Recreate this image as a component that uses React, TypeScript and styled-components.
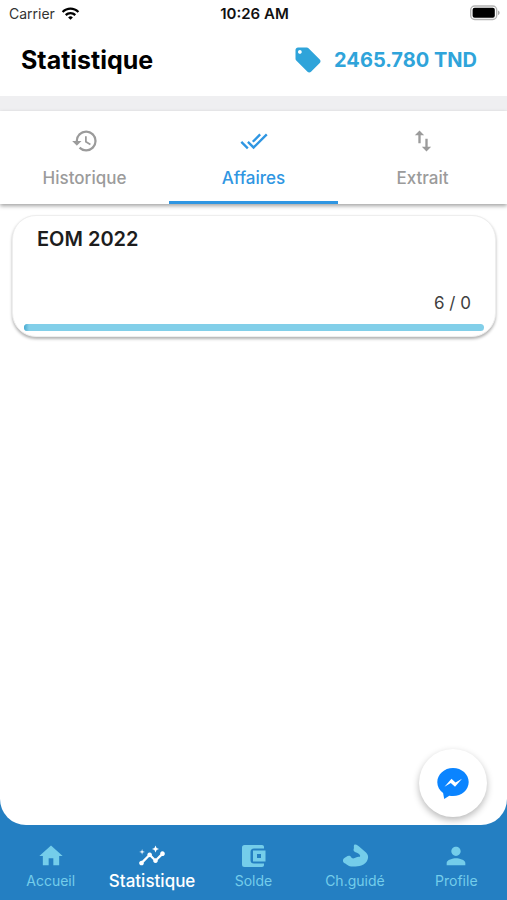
import React, { useState } from "react";
import styled, { createGlobalStyle } from "styled-components";
import type { IconType } from "react-icons";
import {
  MdDoneAll,
  MdHistory,
  MdHome,
  MdInsights,
  MdLocalOffer,
  MdPerson,
  MdSwapVert,
  MdWifi,
} from "react-icons/md";

const GlobalStyle = createGlobalStyle`
  *, *::before, *::after { box-sizing: border-box; }
  body { margin: 0; background: #247fc2; font-family: Inter, "Liberation Sans", sans-serif; }
  button { font: inherit; border: 0; padding: 0; background: none; cursor: pointer; }
`;

const Screen = styled.div`
  min-height: 100vh;
  display: flex;
  flex-direction: column;
  background: #247fc2;
`;

const Page = styled.div`
  position: relative;
  flex: 1;
  display: flex;
  flex-direction: column;
  background: #fff;
  border-radius: 0 0 26px 26px;
`;

const StatusBar = styled.div`
  display: grid;
  grid-template-columns: 1fr auto 1fr;
  align-items: center;
  height: 26px;
  padding: 0 7px 0 9px;
  font-size: 14px;
  color: #111;
`;

const Carrier = styled.span`
  display: flex;
  align-items: center;
  gap: 6px;
  color: #333;
  svg { color: #000; stroke: #000; }
`;

const Clock = styled.time`
  font-size: 15px;
  font-weight: 600;
`;

const BatterySlot = styled.span`
  display: flex;
  justify-content: flex-end;
`;

const Header = styled.header`
  display: flex;
  align-items: center;
  justify-content: space-between;
  height: 70px;
  padding: 0 30px 2px 21px;
`;

const Title = styled.h1`
  margin: 0;
  font-size: 25px;
  font-weight: 700;
  line-height: 32px;
  color: #000;
`;

const Balance = styled.div`
  display: flex;
  align-items: center;
  gap: 11px;
  font-size: 20px;
  font-weight: 700;
  line-height: 28px;
  color: #2fa4da;
`;

const Divider = styled.div`
  height: 15px;
  background: #efeff1;
`;

const Tabs = styled.div`
  display: grid;
  grid-template-columns: repeat(3, 1fr);
  height: 93px;
  background: #fff;
  box-shadow: 0 2px 4px rgba(0, 0, 0, 0.36);
`;

const Tab = styled.button<{ $active: boolean }>`
  display: flex;
  flex-direction: column;
  align-items: center;
  gap: 11px;
  && { padding: 16px 0 0; }
  border-bottom: 3px solid ${(p) => (p.$active ? "#2f96e2" : "transparent")};
  color: ${(p) => (p.$active ? "#2f96e2" : "#9b9b9b")};
  font-size: 17px;
  font-weight: 500;
  line-height: 24px;
`;

const List = styled.main`
  flex: 1;
  padding: 11px 11px 11px 12px;
`;

const Card = styled.article`
  display: flex;
  flex-direction: column;
  justify-content: space-between;
  height: 122px;
  padding: 10px 11px 5px;
  border: 1px solid #eee;
  border-radius: 24px;
  background: #fff;
  box-shadow: 0 2px 3px rgba(0, 0, 0, 0.3);
`;

const CardTitle = styled.h2`
  margin: 0 13px;
  font-size: 20px;
  font-weight: 600;
  line-height: 26px;
  color: #1d1d1d;
`;

const CardFooter = styled.div`
  display: flex;
  flex-direction: column;
  gap: 10px;
`;

const Score = styled.span`
  margin: 0 13px;
  align-self: flex-end;
  font-size: 17px;
  line-height: 22px;
  color: #404040;
`;

const Track = styled.div`
  height: 7px;
  overflow: hidden;
  border-radius: 4px;
  background: #82cfe9;
`;

const Fill = styled.div`
  height: 100%;
  background: linear-gradient(to right, #48a9cf, #82cfe9);
`;

const ChatButton = styled.button`
  position: absolute;
  right: 20px;
  bottom: 8px;
  display: flex;
  align-items: center;
  justify-content: center;
  width: 68px;
  height: 68px;
  border-radius: 50%;
  && { background: #fff; }
  box-shadow: 0 3px 7px rgba(0, 0, 0, 0.28);
`;

const BottomNav = styled.nav`
  display: grid;
  grid-template-columns: repeat(5, 1fr);
  height: 75px;
`;

const NavItem = styled.button<{ $active: boolean }>`
  display: flex;
  flex-direction: column;
  align-items: center;
  && { padding-top: 17px; }
  color: ${(p) => (p.$active ? "#fff" : "#74cdea")};
  font-size: ${(p) => (p.$active ? 17 : 14)}px;
  font-weight: ${(p) => (p.$active ? 500 : 400)};
  line-height: 22px;
`;

const Battery = () => (
  <svg width="30" height="16" viewBox="0 0 30 16" aria-label="Batterie pleine">
    <rect x="0.7" y="1" width="26" height="13.5" rx="4" fill="#fff" stroke="#b4b4b4" strokeWidth="1.4" />
    <rect x="2.6" y="2.8" width="22.2" height="9.9" rx="2" fill="#000" />
    <path d="M28 5.500c2.200.8 2.200 3.800 0 4.600z" fill="#aaa" />
  </svg>
);

const Messenger = () => (
  <svg width="32" height="32" viewBox="0 0 32 32" aria-hidden="true">
    <path
      d="M16 1C7.300 1 .3 7.300.3 15.200c0 4.300 2.100 8.100 5.800 10.700L7.200 32l5.100-3.300c1.200.3 2.400.4 3.700.4 8.700 0 15.700-6.100 15.700-14S24.700 1 16 1z"
      fill="#0a84ff"
    />
    <path d="M7.500 19.800l7-8 4 3.700 6.500-3.700-7 8-4.200-3.700z" fill="#fff" />
  </svg>
);

const Wallet = () => (
  <svg width="28" height="28" viewBox="0 0 28 28" fill="currentColor" aria-hidden="true">
    <path d="M5.500 3H23c1.200 0 2 .8 2 2v1.500H15A3.500 3.500 0 0 0 11.500 10v8a3.500 3.500 0 0 0 3.500 3.500H25V23c0 1.200-.8 2-2 2H5.500A2.500 2.500 0 0 1 3 22.500v-17A2.500 2.500 0 0 1 5.500 3z" />
    <path fillRule="evenodd" d="M14 8.500H26.500v11H14zM18 12v4h4v-4z" />
  </svg>
);

const FlexedArm = () => (
  <svg width="28" height="28" viewBox="0 0 28 28" fill="currentColor" aria-hidden="true">
    <path d="M13.800 2.600c1.600-.4 3.600 1.200 5.700 3.200l5.500 4.800c1.900 1.700 2.600 4 1.800 6.400-.8 3.200-3.300 5.400-6.500 6.400-3.900 1.200-9.600 1.400-12.300.5-1.600-.6-2.700-1.700-3.800-2.400-1.500-.7-2.500-1.800-2.200-3.300.2-1.500 1.600-2.600 3.400-3.400 1.400-1.300 3.800-1.500 4.700.3.800 1.600 2.200 1.700 3.600.9 1.700-.8 3.300-1.300 5.300-1.300.5-1.300-.3-2.400-1.700-3.300-1.700-1-4.200-1.500-4.700-3-.3-1.300.5-1.800.3-3-.1-1.600-.1-2.500.9-2.800z" />
  </svg>
);

type Item = { label: string; Icon: IconType | React.FC };

const tabs: Item[] = [
  { label: "Historique", Icon: MdHistory },
  { label: "Affaires", Icon: MdDoneAll },
  { label: "Extrait", Icon: MdSwapVert },
];

const navItems: Item[] = [
  { label: "Accueil", Icon: MdHome },
  { label: "Statistique", Icon: MdInsights },
  { label: "Solde", Icon: Wallet },
  { label: "Ch.guidé", Icon: FlexedArm },
  { label: "Profile", Icon: MdPerson },
];

const deals = [{ name: "EOM 2022", score: "6 / 0", progress: 1 }];

export default function App() {
  const [tab, setTab] = useState("Affaires");
  const [section, setSection] = useState("Statistique");

  return (
    <>
      <GlobalStyle />
      <Screen>
        <Page>
          <StatusBar>
            <Carrier>
              Carrier <MdWifi size={19} />
            </Carrier>
            <Clock>10:26 AM</Clock>
            <BatterySlot>
              <Battery />
            </BatterySlot>
          </StatusBar>
          <Header>
            <Title>Statistique</Title>
            <Balance>
              <MdLocalOffer size={30} />
              2465.780 TND
            </Balance>
          </Header>
          <Divider />
          <Tabs role="tablist">
            {tabs.map(({ label, Icon }) => (
              <Tab key={label} role="tab" aria-selected={tab === label} $active={tab === label} onClick={() => setTab(label)}>
                <Icon size={28} />
                {label}
              </Tab>
            ))}
          </Tabs>
          <List>
            {deals.map((deal) => (
              <Card key={deal.name}>
                <CardTitle>{deal.name}</CardTitle>
                <CardFooter>
                  <Score>{deal.score}</Score>
                  <Track role="progressbar" aria-label={deal.name} aria-valuenow={deal.progress}>
                    <Fill style={{ width: `${deal.progress}%` }} />
                  </Track>
                </CardFooter>
              </Card>
            ))}
          </List>
          <ChatButton aria-label="Messenger">
            <Messenger />
          </ChatButton>
        </Page>
        <BottomNav>
          {navItems.map(({ label, Icon }) => (
            <NavItem key={label} $active={section === label} onClick={() => setSection(label)}>
              <Icon size={28} />
              {label}
            </NavItem>
          ))}
        </BottomNav>
      </Screen>
    </>
  );
}
